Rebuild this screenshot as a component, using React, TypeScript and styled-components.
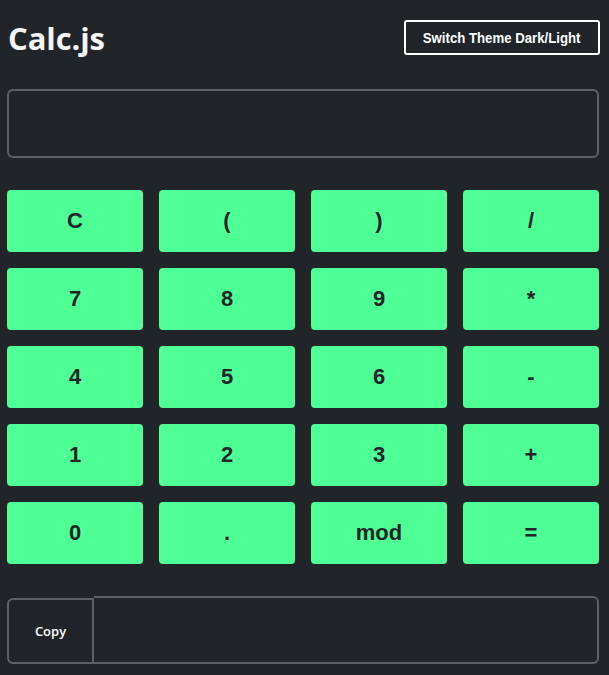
import React from "react";
import styled, { createGlobalStyle } from "styled-components";

const Global = createGlobalStyle`
  html, body { margin: 0; padding: 0; background: #212429; }
  body { font-family: "Liberation Sans", Arial, sans-serif; }
`;

const Page = styled.div`
  width: 592px;
  padding: 0 10px 0 7px;
  display: flex;
  flex-direction: column;
`;

const Header = styled.header`
  display: flex;
  justify-content: space-between;
  align-items: center;
  height: 74px;
  padding-top: 1px;
  box-sizing: border-box;
  padding-left: 1px;
`;

const Title = styled.h1`
  margin: 0;
  font-family: "Open Sans", sans-serif;
  font-weight: 700;
  font-size: 31px;
  color: #f3f4f6;
  letter-spacing: -0.1px;
`;

const ThemeButton = styled.button`
  background: transparent;
  border: 2px solid #ffffff;
  border-radius: 3px;
  color: #ffffff;
  width: 196px;
  height: 35px;
  padding: 0;
  margin-right: -1px;
  display: flex;
  align-items: center;
  justify-content: center;
`;

const ThemeLabel = styled.span`
  display: inline-block;
  font-family: "Liberation Sans", Arial, sans-serif;
  font-weight: 700;
  font-size: 15px;
  white-space: nowrap;
  transform: scaleX(0.88);
`;

const Display = styled.div`
  margin-top: 15px;
  height: 69px;
  border: 2px solid #5f6062;
  border-radius: 6px;
  box-sizing: border-box;
`;

const Keypad = styled.div`
  margin-top: 32px;
  display: grid;
  grid-template-columns: repeat(4, 136px);
  grid-auto-rows: 62px;
  column-gap: 16px;
  row-gap: 16px;
`;

const Key = styled.button`
  background: #4dff94;
  border: none;
  border-radius: 4px;
  color: #212429;
  font-family: "Liberation Sans", Arial, sans-serif;
  font-weight: 700;
  font-size: 22px;
  padding: 0;
`;

const Output = styled.div`
  margin-top: 32px;
  display: flex;
  height: 68px;
`;

const CopyButton = styled.button`
  width: 87px;
  margin-top: 2px;
  height: 66px;
  background: transparent;
  border: 2px solid #5f6062;
  border-radius: 6px 0 0 6px;
  color: #ffffff;
  font-family: "Open Sans", sans-serif;
  font-size: 13px;
  font-weight: 600;
  padding: 0;
  box-sizing: border-box;
`;

const Result = styled.div`
  flex: 1;
  border: 2px solid #5f6062;
  border-left: none;
  border-radius: 0 6px 6px 0;
  box-sizing: border-box;
`;

const keys = ["C", "(", ")", "/", "7", "8", "9", "*", "4", "5", "6", "-", "1", "2", "3", "+", "0", ".", "mod", "="];

export default function App() {
  return (
    <>
      <Global />
      <Page>
        <Header>
          <Title>Calc.js</Title>
          <ThemeButton>
            <ThemeLabel>Switch Theme Dark/Light</ThemeLabel>
          </ThemeButton>
        </Header>
        <Display />
        <Keypad>
          {keys.map((k) => (
            <Key key={k}>{k}</Key>
          ))}
        </Keypad>
        <Output>
          <CopyButton>Copy</CopyButton>
          <Result />
        </Output>
      </Page>
    </>
  );
}
